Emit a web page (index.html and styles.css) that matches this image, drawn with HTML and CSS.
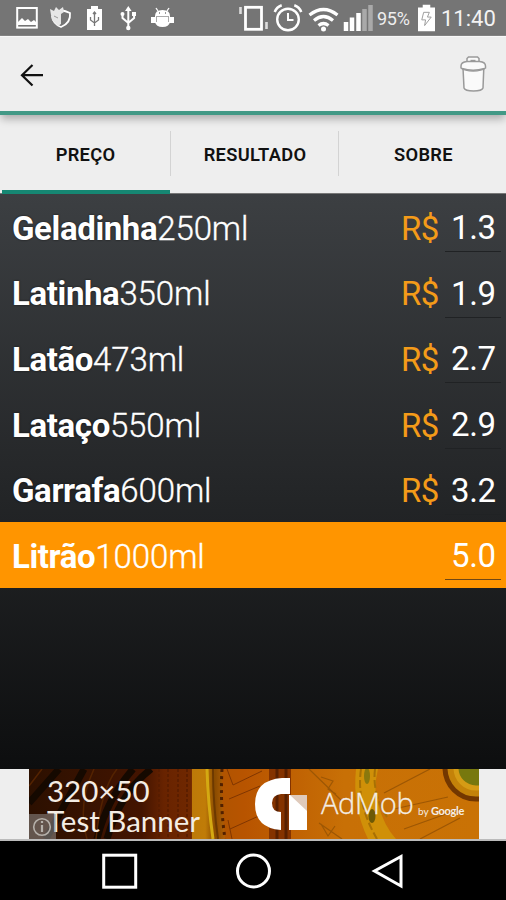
FILE: index.html
```html
<!DOCTYPE html>
<html lang="pt-BR">
<head>
<meta charset="utf-8">
<title>Preço</title>
<link rel="stylesheet" href="styles.css">
</head>
<body>
<main class="screen">
  <header class="status">
    <svg class="status-icons" viewBox="0 0 376 36" fill="none" stroke="#fff" stroke-width="2">
      <rect x="17.2" y="8" width="19.6" height="19.6"/>
      <path d="M18 25v-3l4-4 3 3 3-2 3 3 3-2 2 2v3z" fill="#fff" stroke="none"/>
      <path d="M60 10q6 1 10 3q1 10-9 14q-8-3-9-11" stroke-width="1.8"/>
      <path d="M50 9l4 2 2-4 3 3 4-3 1 5-3 2v10l-3 2-6-6-1-5z" fill="#e6e6e6" stroke="none"/>
      <path d="M54 16l4 2" stroke="#999" stroke-width="1"/>
      <path d="M91 6h7v3h4v21H87V9h4z" fill="#fff" stroke="none"/>
      <path d="M94.500 13v13M90.500 17v3l4 3 4-3v-3M93 14l1.500-2 1.500 2" stroke="#777" stroke-width="1.300"/>
      <path d="M128.300 8v20M122.500 14v4l5.800 5 5.800-5v-4"/>
      <path d="M125 11l3.300-5 3.300 5zM132 12h4v4h-4z" fill="#fff" stroke="none"/>
      <circle cx="128.300" cy="28" r="2.200" fill="#fff" stroke="none"/><circle cx="122.500" cy="14" r="2" fill="#fff" stroke="none"/>
      <path d="M155 16q0-6 7.500-6t7.500 6v6q-1 5-7.500 5t-7.500-5z" fill="#fff" stroke="none"/>
      <path d="M158 11l-2-3M167 11l2-3" stroke-width="1.300"/>
      <rect x="151" y="17" width="5" height="6" fill="#fff" stroke="none"/><rect x="169" y="17" width="5" height="6" fill="#fff" stroke="none"/>
      <path d="M156 16.500h13M156.500 17v5M168.500 17v5" stroke="#aaa" stroke-width="1"/>
      <path d="M159 13h1M165 13h1" stroke="#777" stroke-width="1.400"/>
      <rect x="245.500" y="7.300" width="16" height="22" stroke-width="2.800"/>
      <path d="M240.500 7v7M266.500 22v7" stroke="#ddd" stroke-width="2.600"/>
      <circle cx="288" cy="19.500" r="10.800" stroke-width="2.400"/>
      <path d="M288 13v7h5.500" stroke-width="2"/>
      <path d="M274.700 12q2-5 7-6.700M301.300 12q-2-5-7-6.700" stroke-width="2.500"/>
      <path d="M309.500 15q14-11 28 0M314 20.500q9.500-8 19 0M318.500 25.500q5-4 10 0" stroke-width="3.200"/>
      <circle cx="323.500" cy="29" r="2.500" fill="#fff" stroke="none"/>
      <path d="M346 22v9M352 17.500v13.500M358.500 13v18" stroke-width="4.500"/>
      <path d="M364.500 9v22M370.500 5v26" stroke="#a9a9a9" stroke-width="4.500"/>
    </svg>
    <span class="percent">95%</span>
    <svg class="battery" viewBox="0 0 18 28"><path d="M5 0h8v3h5v25H0V3h5z" fill="#fff"/><path d="M6 8h6l-2 5h4l-7 9 1-6H4z" fill="none" stroke="#999"/></svg>
    <span class="clock">11:40</span>
  </header>

  <nav class="toolbar">
    <svg class="back" viewBox="0 0 24 24" fill="none" stroke="#111" stroke-width="2.200"><path d="M23 12.200H2M12.500 2L2 12.200 12.500 22.500"/></svg>
    <svg class="trash" viewBox="0 0 28 38" fill="#fafafa" stroke="#9a9a9a" stroke-width="1.500">
      <path d="M4 13l1 20q1 3 9.500 3t9.500-3l.8-20z"/>
      <path d="M8 9V3.500L9.500 2h9L20 3.500V9z"/>
      <path d="M2 11q0-4 6-4.500h12.500q6 .5 6 4.500v2q-4 3-12.300 3T2 13z"/>
      <path d="M3 13.500q11 3.500 22.500 0" fill="none"/>
      <path d="M11.500 5.800h5" stroke-width="2"/>
    </svg>
  </nav>

  <div class="tabs">
    <div class="tab active">PREÇO</div>
    <div class="tab">RESULTADO</div>
    <div class="tab">SOBRE</div>
  </div>

  <section class="list">
    <div class="row"><b>Geladinha</b><span class="size">250ml</span><span class="currency">R$</span><span class="price">1.3</span></div>
    <div class="row"><b>Latinha</b><span class="size">350ml</span><span class="currency">R$</span><span class="price">1.9</span></div>
    <div class="row"><b>Latão</b><span class="size">473ml</span><span class="currency">R$</span><span class="price">2.7</span></div>
    <div class="row"><b>Lataço</b><span class="size">550ml</span><span class="currency">R$</span><span class="price">2.9</span></div>
    <div class="row"><b>Garrafa</b><span class="size">600ml</span><span class="currency">R$</span><span class="price">3.2</span></div>
    <div class="row best"><b>Litrão</b><span class="size">1000ml</span><span class="price">5.0</span></div>
  </section>

  <aside class="ad">
    <div class="banner">
      <svg class="art" viewBox="0 0 450 70" preserveAspectRatio="none">
        <defs>
          <linearGradient id="wood"><stop offset="0" stop-color="#2c1000"/><stop offset=".25" stop-color="#431400"/><stop offset=".3" stop-color="#682300"/><stop offset=".36" stop-color="#702800"/><stop offset=".37" stop-color="#a85400"/><stop offset=".48" stop-color="#b85400"/><stop offset=".7" stop-color="#c87006"/><stop offset="1" stop-color="#c97205"/></linearGradient>
          <linearGradient id="gold"><stop offset="0" stop-color="#bd7a08"/><stop offset=".4" stop-color="#c07c08"/><stop offset=".7" stop-color="#8a4b00"/><stop offset="1" stop-color="#b06006"/></linearGradient>
        </defs>
        <rect width="450" height="70" fill="url(#wood)"/>
        <path d="M30 0L0 34M55 0L17 70M122 0Q91 24 78 70M104 0Q78 30 68 70" fill="none" stroke="#150900" stroke-width="7"/>
        <path d="M65 0Q48 36 58 70M88 0Q72 20 67 70M13 0L0 17" fill="none" stroke="#542300" stroke-width="1.500"/>
        <path d="M130 0v70M139 0v70M149 0v70M158 0v70" stroke="#551d00" stroke-width="1.500" stroke-dasharray="3 2"/>
        <path d="M163 0h30q-1 35 3 70h-33z" fill="url(#gold)"/>
        <path d="M178 0q1 35 6 70" stroke="#d4a912" stroke-width="3" fill="none"/>
        <path d="M184 0q0 35 5 70" stroke="#6c3900" stroke-width="2" fill="none"/>
        <path d="M193 0q-2 36 3 70" stroke="#512000" stroke-width="3" stroke-dasharray="3 4" fill="none"/>
        <path d="M200 30l31-13M201 60l31-14M198 0l6 16 29-14M203 70l-4-19" stroke="#803600" fill="none"/>
        <path d="M240 0h22v70h-22z" fill="#843300"/>
        <path d="M248 0v70M257 0v70" stroke="#582000" stroke-width="3"/>
        <path d="M327 0h22q-5 20 0 35 6 22 18 35h-28q-16-33-12-70z" fill="#d09008"/>
        <path d="M332 0q-5 34 16 70M346 0q-3 25 12 48" fill="none" stroke="#a87005" stroke-width="2" stroke-dasharray="8 3"/>
        <ellipse cx="343" cy="47" rx="3.500" ry="7" fill="#6d5905"/><ellipse cx="338" cy="7" rx="3" ry="8" fill="#8a780d"/>
        <path d="M355 24l46-24M365 40l54-12M375 60l56-20M391 70l40-21M280 0l34 33M290 54l23 16M292 8l12 4-5 8 8 5M292 55l7 12 7-10" stroke="#9d5704" fill="none" stroke-width="1.200"/>
        <circle cx="447" cy="-1" r="31" fill="#c48209" stroke="#733700" stroke-width="5"/>
        <circle cx="447" cy="-1" r="20" fill="#77780e" stroke="#d59b15" stroke-width="5"/>
      </svg>
      <div class="ad-copy">320×50<br>Test Banner</div>
      <svg class="info" viewBox="0 0 27 25"><rect width="27" height="25" fill="#999" fill-opacity=".5"/><circle cx="13" cy="13" r="8.300" fill="none" stroke="#b5b0aa" stroke-width="1.600"/><path d="M13 11v7M13 7v2" stroke="#b5b0aa" stroke-width="2.200"/></svg>
      <svg class="mark" viewBox="0 0 52 52"><path d="M35 0H27Q0 2 0 26t26 26V34q-9 0-9-9 0-8 9-9h9z" fill="#fff"/><path d="M34 17h18v35H34z" fill="#fff"/><path d="M35 17h17v16z" fill="#dfcabb"/></svg>
      <span class="admob">AdMob</span>
      <span class="by">by <b>Google</b></span>
    </div>
  </aside>

  <footer class="nav">
    <svg viewBox="0 0 506 59" fill="none" stroke="#fff" stroke-width="3"><rect x="103.700" y="14.200" width="32" height="32"/><circle cx="253.500" cy="30" r="16"/><path d="M401 15.500L374.500 30 401 45z"/></svg>
  </footer>
</main>
</body>
</html>
```
FILE: styles.css
```css
* { box-sizing: border-box; }
body { margin: 0; font-family: Roboto, sans-serif; }
svg { display: block; flex: none; }
.screen { width: 506px; height: 900px; display: flex; flex-direction: column; overflow: hidden; background: #eee; }
.status { height: 36px; flex: none; display: flex; align-items: center; background: #757575; color: #fff; border-bottom: 1px solid #858585; }
.status-icons { width: 376px; height: 36px; }
.percent { width: 42px; padding-left: 1px; font-size: 18px; letter-spacing: -.3px; color: #eee; padding-top: 2px; }
.battery { width: 17px; height: 28px; }
.clock { margin-left: 6px; font-size: 22px; padding-top: 2px; color: #f3f3f3; }
.toolbar { height: 79px; flex: none; display: flex; align-items: center; justify-content: space-between; padding: 0 19px 0 20px; border-top: 1px solid #f8f8f8; border-bottom: 4px solid #429986; background: #eee; position: relative; z-index: 1; box-shadow: 0 5px 8px -1px rgba(0,0,0,.28); }
.back { width: 24px; height: 24px; margin-top: 1px; }
.trash { width: 28px; height: 38px; }
.tabs { height: 79px; flex: none; display: grid; grid-template-columns: 171px 168px 167px; background: #eee; border-bottom: 1px solid #777; }
.tab { position: relative; display: flex; align-items: center; justify-content: center; font-size: 18.300px; font-weight: 600; letter-spacing: .3px; color: #111; }
.tab:last-child { padding-left: 2px; }
.tab + .tab::before { content: ""; position: absolute; left: -1px; top: 16px; width: 1px; height: 45px; background: #d3d3d3; }
.active::after { content: ""; position: absolute; left: 2px; right: 1px; bottom: -1px; height: 4px; background: #168773; }
.list { flex: 1; background: linear-gradient(#3c3f42, #0d0e0f); }
.row { height: 65.600px; display: flex; align-items: center; padding: 3px 5px 0 12px; color: #fff; font-size: 33px; white-space: nowrap; }
.row b { font-weight: 700; letter-spacing: -.38px; text-shadow: 0 0 2px #111; }
.size { font-weight: 300; letter-spacing: -.1px; -webkit-text-stroke: .35px #fff; }
.currency { margin-left: auto; margin-right: 6px; color: #f49b19; letter-spacing: -.4px; }
.price { width: 56px; height: 48px; padding: 3px 0 0 6px; line-height: 42px; letter-spacing: -.4px; border-bottom: 1px solid #202224; }
.best { height: 66px; background: #ff9500; }
.best b { text-shadow: none; }
.best .price { margin-left: auto; border-color: #704714; }
.ad { height: 72px; flex: none; background: #eee; border-bottom: 2px solid #bbb; padding-left: 29px; }
.banner { width: 450px; height: 70px; position: relative; overflow: hidden; font-family: Lato, sans-serif; color: #f4ede4; }
.art { position: absolute; inset: 0; width: 450px; height: 70px; }
.ad-copy { position: absolute; left: 18px; top: 7px; font-size: 29.500px; line-height: 30px; white-space: nowrap; }
.info { position: absolute; left: 0; bottom: 0; width: 27px; height: 25px; }
.mark { position: absolute; left: 226px; top: 9px; width: 52px; height: 52px; }
.admob { position: absolute; left: 292px; top: 16px; font: 300 29px/36px "Open Sans", sans-serif; letter-spacing: -.3px; -webkit-text-stroke: .3px #f4ede4; }
.by { position: absolute; left: 389px; top: 34px; font-size: 10px; line-height: 16px; white-space: nowrap; }
.by b { font-size: 11px; letter-spacing: -.3px; }
.nav { height: 59px; flex: none; background: #000; }
.nav svg { width: 506px; height: 59px; }
```
